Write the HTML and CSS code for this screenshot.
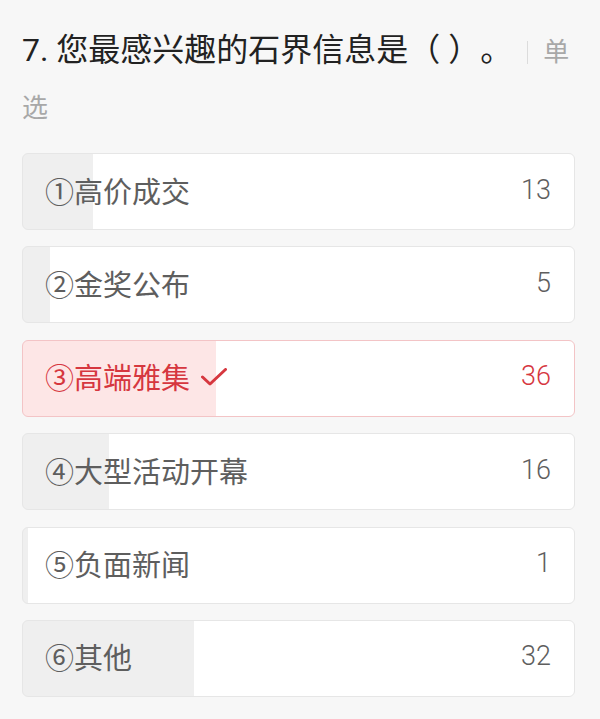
FILE: index.html
```html
<!DOCTYPE html>
<html lang="zh-CN">
<head>
<meta charset="utf-8">
<title>投票结果</title>
<link rel="stylesheet" href="styles.css">
</head>
<body>
<div class="page">
  <h1 class="title">7. 您最感兴趣的石界信息是（ ）。<span class="sep"></span><span class="type">单选</span></h1>
  <ul class="options">
    <li class="option" style="--p:12.62%"><span class="label">①高价成交</span><span class="count">13</span></li>
    <li class="option" style="--p:4.85%"><span class="label">②金奖公布</span><span class="count">5</span></li>
    <li class="option selected" style="--p:34.95%"><span class="label">③高端雅集<svg class="check" viewBox="0 0 26 18" width="26" height="18"><polyline points="1.5,9 9,16 24.5,1.5" fill="none" stroke="currentColor" stroke-width="3" stroke-linecap="round" stroke-linejoin="round"/></svg></span><span class="count">36</span></li>
    <li class="option" style="--p:15.53%"><span class="label">④大型活动开幕</span><span class="count">16</span></li>
    <li class="option" style="--p:0.97%"><span class="label">⑤负面新闻</span><span class="count">1</span></li>
    <li class="option" style="--p:31.07%"><span class="label">⑥其他</span><span class="count">32</span></li>
  </ul>
</div>
</body>
</html>
```
FILE: styles.css
```css
html, body {
  margin: 0;
  padding: 0;
  background: #f7f7f7;
}
body {
  font-family: Roboto, "Noto Sans CJK SC", "Noto Sans", sans-serif;
  text-spacing-trim: space-all;
}
.page {
  width: 553px;
  padding: 22px 0 0 22px;
}
.title {
  margin: 0 0 19px 0;
  font-size: 32px;
  font-weight: 400;
  line-height: 56px;
  color: #222;
}
.sep {
  display: inline-block;
  width: 1px;
  height: 23px;
  background: #dcdcdc;
  margin: 0 15px 0 15px;
  vertical-align: -3px;
}
.type {
  font-size: 26px;
  line-height: 1;
  color: #a8a8a8;
}
.options {
  list-style: none;
  margin: 0;
  padding: 0;
  display: flex;
  flex-direction: column;
  gap: 16.4px;
}
.option {
  box-sizing: border-box;
  height: 77px;
  border: 1px solid #e6e6e6;
  border-radius: 6px;
  background: linear-gradient(to right, #efefef var(--p), #ffffff var(--p));
  display: flex;
  align-items: center;
  justify-content: space-between;
  padding: 0 23px 4px 22px;
  color: #5e5e5e;
  font-size: 29px;
}
.label {
  display: flex;
  align-items: center;
}
.count {
  font-size: 27px;
  font-weight: 300;
  color: #5e5e5e;
}
.option.selected {
  border-color: #f3c4c6;
  background: linear-gradient(to right, #fde6e6 var(--p), #ffffff var(--p));
  color: #d6373f;
}
.option.selected .count {
  color: #d6373f;
}
.check {
  margin-left: 11px;
  margin-top: 2px;
}
```
